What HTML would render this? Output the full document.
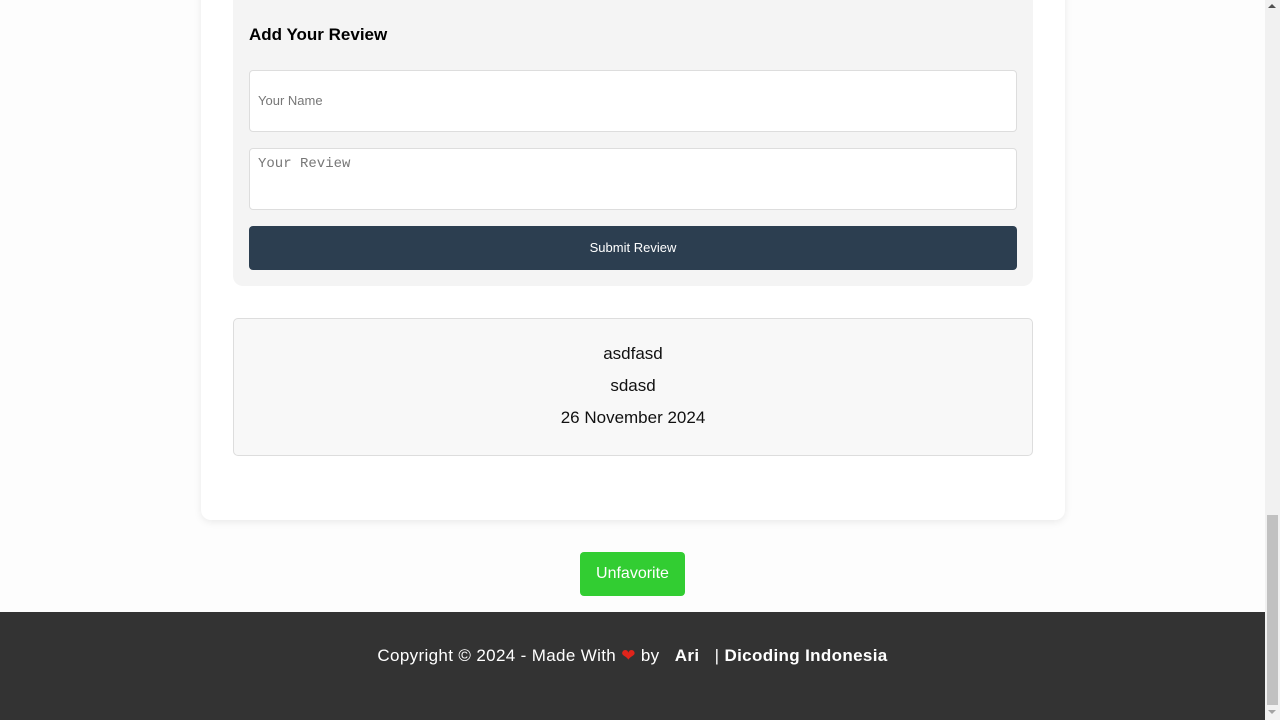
<!DOCTYPE html>
<html><head><style>
*{box-sizing:border-box;margin:0;padding:0}
body{width:1280px;height:720px;overflow:hidden;background:#fdfdfd;font-family:"Liberation Sans",sans-serif;position:relative}
.sb{position:absolute;left:1265px;top:0;width:15px;height:720px;background:#f1f1f1}
.sb .th{position:absolute;left:2px;top:515px;width:11px;height:190px;background:#c1c1c1}
.sb .up{position:absolute;left:3px;top:4px;border:4px solid transparent;border-bottom:4px solid #505050;border-top:0;width:0;height:0}
.sb .dn{position:absolute;left:3px;top:710px;border:4px solid transparent;border-top:4px solid #a3a3a3;border-bottom:0}
.card{position:absolute;left:201px;top:-20px;width:864px;height:540px;background:#fff;border-radius:10px;box-shadow:0 2px 8px rgba(0,0,0,.08)}
.form{position:absolute;left:233px;top:-10px;width:800px;height:296px;background:#f4f4f4;border-radius:10px}
h3{position:absolute;left:249px;top:25px;font-size:17px;font-weight:bold;color:#000}
.in{position:absolute;left:249px;width:768px;background:#fff;border:1px solid #ddd;border-radius:4px;color:#777;font-size:13px}
.btn{position:absolute;left:249px;top:226px;width:768px;height:44px;background:#2c3e50;border-radius:4px;color:#fff;font-size:13px;text-align:center;line-height:44px}
.rev{position:absolute;left:233px;top:318px;width:800px;height:138px;background:#f8f8f8;border:1px solid #ddd;border-radius:5px;text-align:center;font-size:17px;color:#111}
.rev div{position:absolute;left:0;width:100%}
.fav{position:absolute;left:580px;top:552px;width:105px;height:44px;background:#32cd32;border-radius:4px;color:#fff;font-size:16px;text-align:center;line-height:44px}
footer{position:absolute;left:0;top:612px;width:1265px;height:108px;background:#333;color:#fff;font-size:17px;text-align:center;padding-top:34px;letter-spacing:0.35px}
</style></head><body>
<div class="card"></div>
<div class="form"></div>
<h3>Add Your Review</h3>
<div class="in" style="top:70px;height:62px;padding:22px 8px">Your Name</div>
<div class="in" style="top:148px;height:62px;padding:7px 8px;font-family:'Liberation Mono',monospace;font-size:14px">Your Review</div>
<div class="btn">Submit Review</div>
<div class="rev"><div style="top:25px">asdfasd</div><div style="top:57px">sdasd</div><div style="top:89px">26 November 2024</div></div>
<div class="fav">Unfavorite</div>
<footer>Copyright © 2024 - Made With <span style="color:#e0241b">❤</span> by &nbsp; <b>Ari</b> &nbsp; | <b>Dicoding Indonesia</b></footer>
<div class="sb"><div class="up"></div><div class="th"></div><div class="dn"></div></div>
</body></html>
